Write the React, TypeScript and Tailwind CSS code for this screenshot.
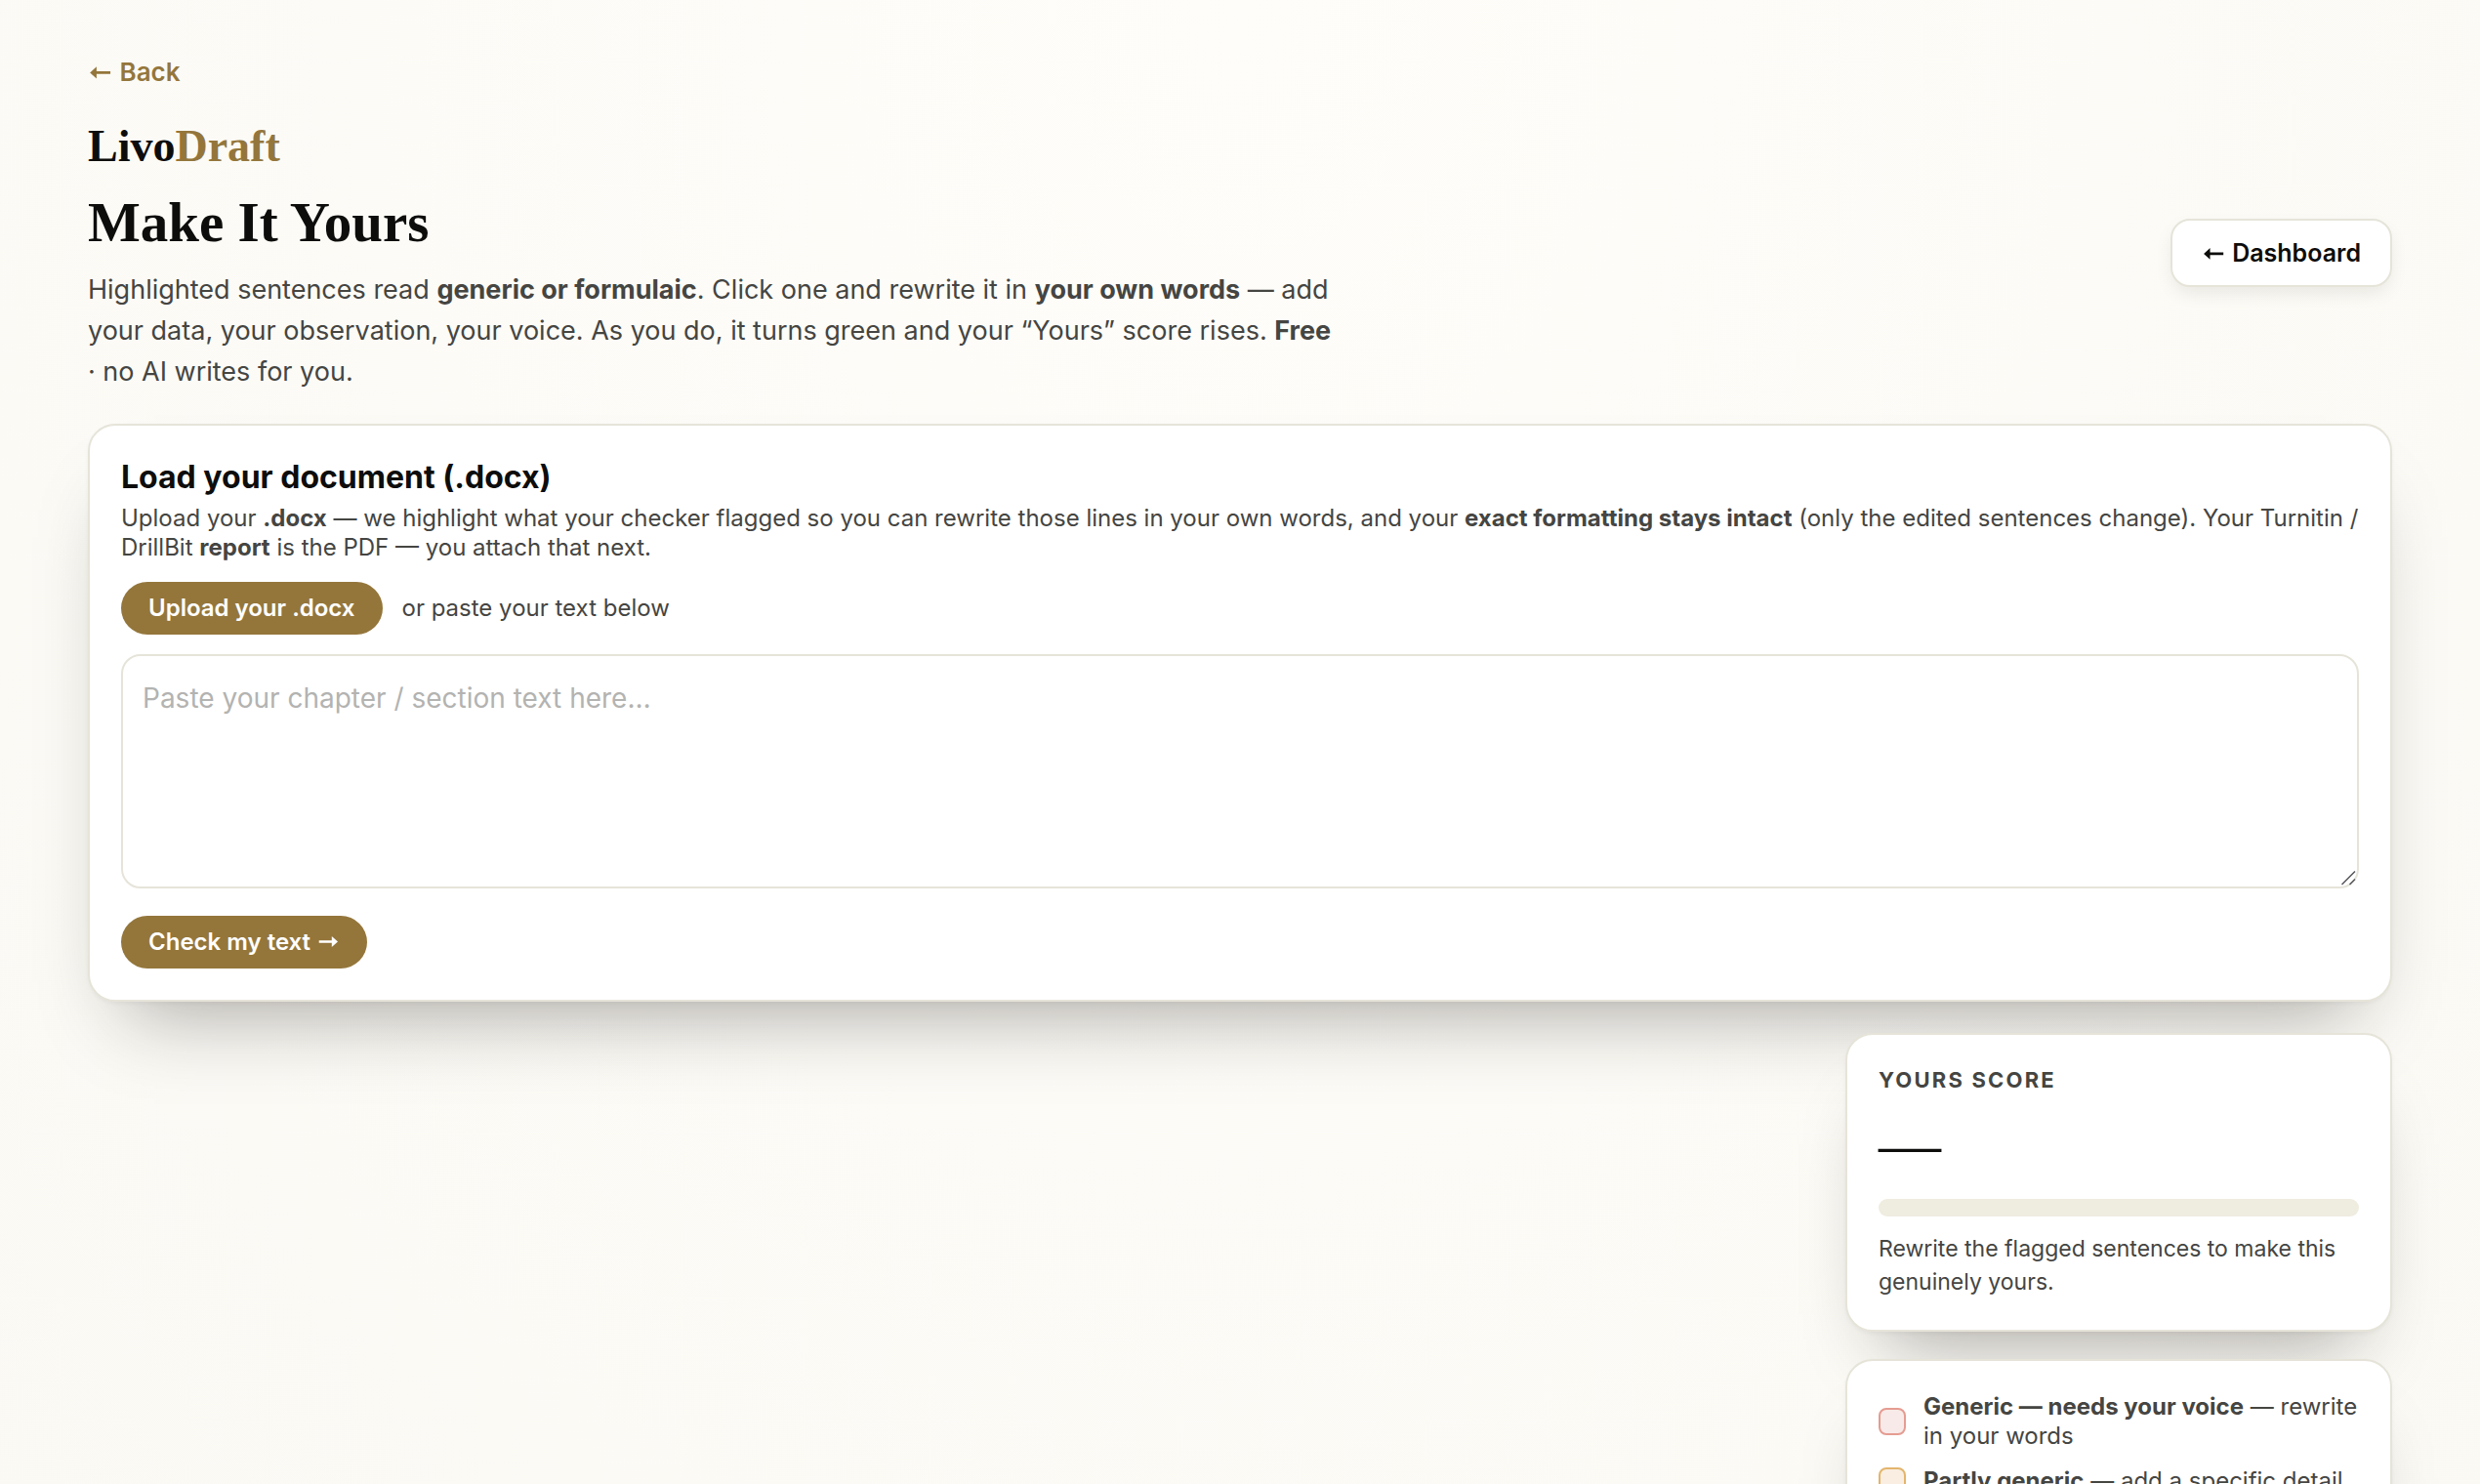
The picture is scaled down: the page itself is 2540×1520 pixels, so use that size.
import { useState } from 'react';
import type { ReactNode } from 'react';
import { clsx } from 'clsx';

interface CardProps {
  className?: string;
  children: ReactNode;
}

function Card({ className, children }: CardProps) {
  return (
    <section
      className={clsx(
        'rounded-[28px] border-2 border-[#e6e4d9] bg-white p-8 shadow-[0_2px_4px_rgba(24,18,14,0.04),0_48px_80px_-40px_rgba(28,20,16,0.38)]',
        className,
      )}
    >
      {children}
    </section>
  );
}

function Arrow({ direction }: { direction: 'left' | 'right' }) {
  return (
    <svg
      viewBox="0 0 24 24"
      className={clsx('inline size-[1em] align-middle', direction === 'right' && '-scale-x-100')}
      fill="currentColor"
      aria-hidden="true"
    >
      <path d="M2 10.5 8.2 4.9V9.2H21.3V11.8H8.2V16.1Z" />
    </svg>
  );
}

interface PillButtonProps {
  onClick?: () => void;
  children: ReactNode;
}

function PillButton({ onClick, children }: PillButtonProps) {
  return (
    <button
      type="button"
      onClick={onClick}
      className="rounded-full bg-[#94763b] px-7 py-3 text-[24px] leading-[30px] font-semibold text-white hover:bg-[#806532]"
    >
      {children}
    </button>
  );
}

const legend = [
  {
    id: 'generic',
    label: 'Generic — needs your voice',
    hint: 'rewrite in your words',
    swatch: 'border-[#e59c91] bg-[#f8eae8]',
  },
  {
    id: 'partly',
    label: 'Partly generic',
    hint: 'add a specific detail',
    swatch: 'border-[#e3b56c] bg-[#f9eee1]',
  },
];

function ScoreCard({ score }: { score: number | null }) {
  return (
    <Card>
      <h2 className="text-[22px] leading-7 font-bold tracking-widest uppercase">Yours score</h2>
      <div className="mt-3 font-['Liberation_Serif',serif] text-[64px] leading-[80px] text-[#0d0d0c]">
        {score === null ? '—' : score}
      </div>
      <div className="mt-4 h-[18px] overflow-hidden rounded-full bg-[#efece0]">
        <div className="h-full rounded-full bg-[#4d8a5b]" style={{ width: `${score ?? 0}%` }} />
      </div>
      <p className="mt-4 text-[23px] leading-[34px]">
        Rewrite the flagged sentences to make this genuinely yours.
      </p>
    </Card>
  );
}

function LegendCard() {
  return (
    <Card>
      <ul className="space-y-4">
        {legend.map((item) => (
          <li key={item.id} className="flex items-center gap-[18px]">
            <span className={clsx('size-7 shrink-0 rounded-lg border-2', item.swatch)} />
            <span className="text-[24px] leading-[30px]">
              <b>{item.label}</b> — {item.hint}
            </span>
          </li>
        ))}
      </ul>
    </Card>
  );
}

export default function App() {
  const [text, setText] = useState('');

  return (
    <div className="min-h-screen bg-[#fcfbf7] bg-[radial-gradient(ellipse_at_top,#fefdf9,#faf9f4)] px-[90px] pt-14 pb-20 font-[Inter,sans-serif] text-[#454542]">
      <a href="#" className="inline-block text-[26px] leading-9 font-semibold text-[#94763b]">
        <Arrow direction="left" /> Back
      </a>

      <header className="mt-6 flex items-center justify-between gap-8">
        <div className="max-w-[1280px]">
          <div className="font-['Liberation_Serif',serif] text-[46px] leading-[68px] font-bold text-[#0d0d0c]">
            Livo<span className="text-[#94763b]">Draft</span>
          </div>
          <h1 className="mt-1.5 font-['Liberation_Serif',serif] text-[57px] leading-[76px] font-bold text-[#0d0d0c]">
            Make It Yours
          </h1>
          <p className="mt-2.5 text-[27px] leading-[42px]">
            Highlighted sentences read <b>generic or formulaic</b>. Click one and rewrite it in{' '}
            <b>your own words</b> — add your data, your observation, your voice. As you do, it turns
            green and your “Yours” score rises. <b>Free</b> · no AI writes for you.
          </p>
        </div>
        <a
          href="#"
          className="shrink-0 rounded-[20px] border-2 border-[#e6e4d9] bg-white px-[30px] py-4 text-[25px] leading-[34px] font-semibold text-[#0d0d0c] shadow-[0_8px_20px_-4px_rgba(24,18,14,0.10)]"
        >
          <Arrow direction="left" /> Dashboard
        </a>
      </header>

      <Card className="mt-8">
        <h2 className="text-[32px] leading-[42px] font-bold text-[#0d0d0c]">
          Load your document (.docx)
        </h2>
        <p className="mt-1.5 text-[24px] leading-[30px]">
          Upload your <b>.docx</b> — we highlight what your checker flagged so you can rewrite those
          lines in your own words, and your <b>exact formatting stays intact</b> (only the edited
          sentences change). Your Turnitin / DrillBit <b>report</b> is the PDF — you attach that
          next.
        </p>
        <div className="mt-5 flex items-center gap-5 text-[24px] leading-[30px]">
          <PillButton>Upload your .docx</PillButton>
          <span>or paste your text below</span>
        </div>
        <div className="relative mt-5">
          <textarea
            aria-label="Your text"
            value={text}
            onChange={(e) => setText(e.target.value)}
            placeholder="Paste your chapter / section text here…"
            className="block h-60 w-full resize-y rounded-[20px] border-2 border-[#e6e4d9] bg-white p-5 text-[28px] leading-[46px] placeholder:text-[#b3b3b1] [&::-webkit-resizer]:bg-transparent"
          />
          {/* grip over the resize corner */}
          <svg
            viewBox="0 0 16 16"
            className="pointer-events-none absolute right-0.5 bottom-0.5 size-4"
            fill="none"
            stroke="#55555a"
            strokeWidth="1.5"
            aria-hidden="true"
          >
            <path d="M0.5 14 14 0.5M8.5 14 14 8.5" />
          </svg>
        </div>
        <div className="mt-7">
          <PillButton>
            Check my text <Arrow direction="right" />
          </PillButton>
        </div>
      </Card>

      <div className="mt-8 grid grid-cols-[minmax(0,1fr)_560px]">
        <aside className="col-start-2 space-y-7">
          <ScoreCard score={null} />
          <LegendCard />
        </aside>
      </div>
    </div>
  );
}
